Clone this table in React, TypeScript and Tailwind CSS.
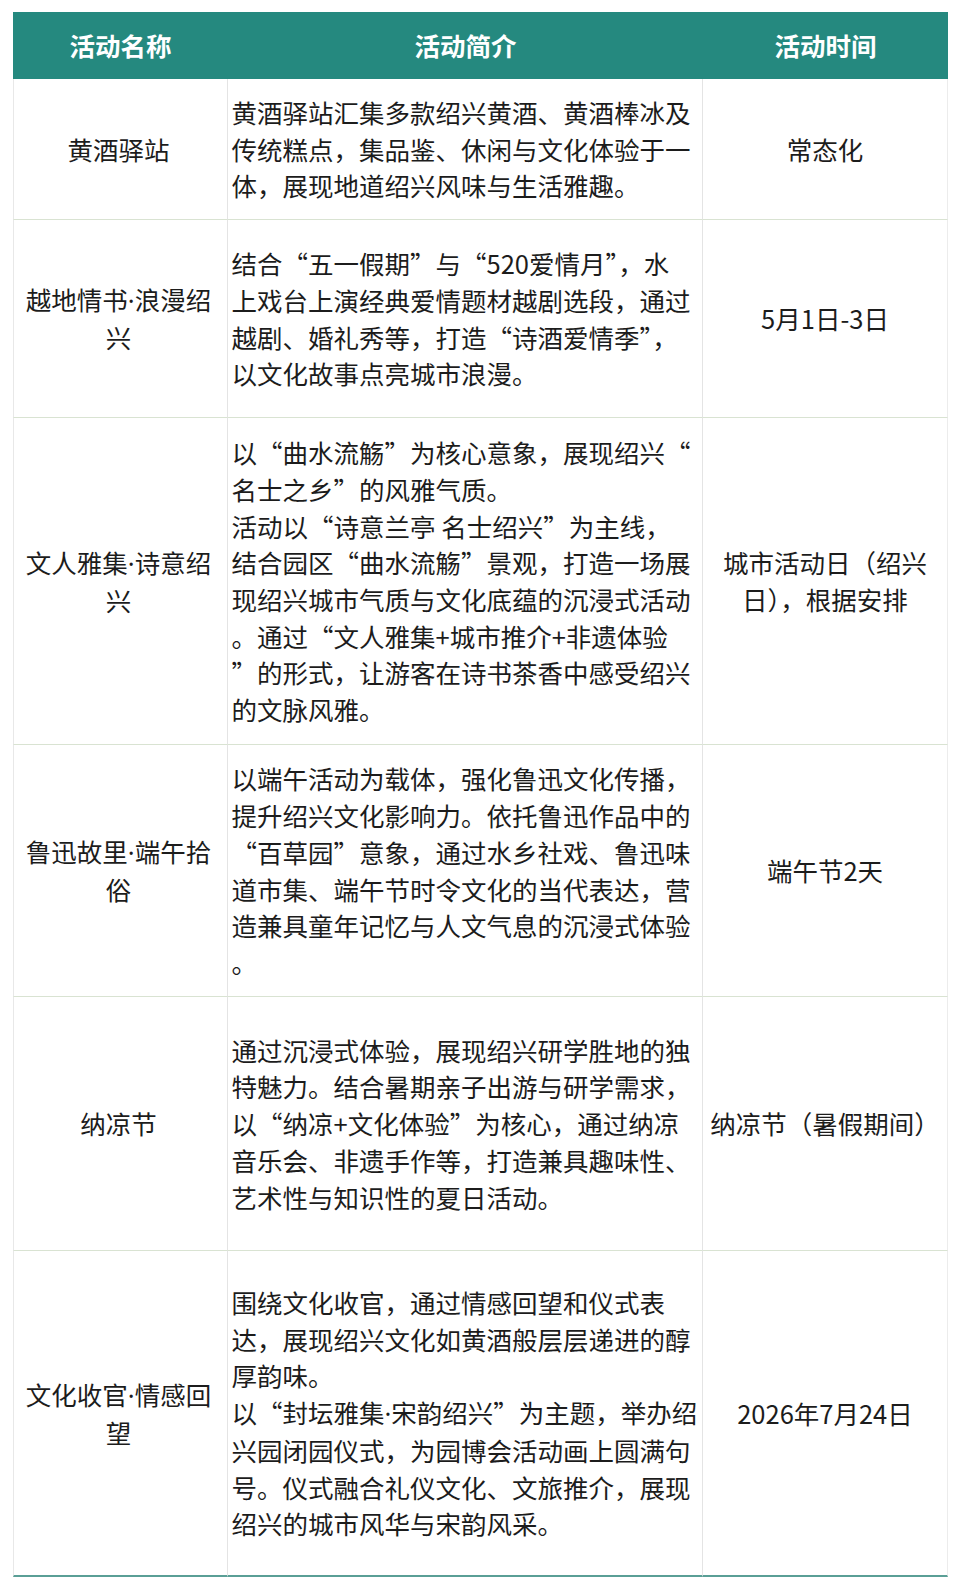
const rows: {
  name: string[];
  desc: string[];
  time: string[];
  h: string;
}[] = [
  {
    name: ["黄酒驿站"],
    desc: [
      "黄酒驿站汇集多款绍兴黄酒、黄酒棒冰及",
      "传统糕点，集品鉴、休闲与文化体验于一",
      "体，展现地道绍兴风味与生活雅趣。",
    ],
    time: ["常态化"],
    h: "h-[141px]",
  },
  {
    name: ["越地情书·浪漫绍", "兴"],
    desc: [
      "结合“五一假期”与“520爱情月”，水",
      "上戏台上演经典爱情题材越剧选段，通过",
      "越剧、婚礼秀等，打造“诗酒爱情季”，",
      "以文化故事点亮城市浪漫。",
    ],
    time: ["5月1日-3日"],
    h: "h-[198px]",
  },
  {
    name: ["文人雅集·诗意绍", "兴"],
    desc: [
      "以“曲水流觞”为核心意象，展现绍兴“",
      "名士之乡”的风雅气质。",
      "活动以“诗意兰亭 名士绍兴”为主线，",
      "结合园区“曲水流觞”景观，打造一场展",
      "现绍兴城市气质与文化底蕴的沉浸式活动",
      "。通过“文人雅集+城市推介+非遗体验",
      "”的形式，让游客在诗书茶香中感受绍兴",
      "的文脉风雅。",
    ],
    time: ["城市活动日（绍兴", "日），根据安排"],
    h: "h-[327px]",
  },
  {
    name: ["鲁迅故里·端午拾", "俗"],
    desc: [
      "以端午活动为载体，强化鲁迅文化传播，",
      "提升绍兴文化影响力。依托鲁迅作品中的",
      "“百草园”意象，通过水乡社戏、鲁迅味",
      "道市集、端午节时令文化的当代表达，营",
      "造兼具童年记忆与人文气息的沉浸式体验",
      "。",
    ],
    time: ["端午节2天"],
    h: "h-[252px]",
  },
  {
    name: ["纳凉节"],
    desc: [
      "通过沉浸式体验，展现绍兴研学胜地的独",
      "特魅力。结合暑期亲子出游与研学需求，",
      "以“纳凉+文化体验”为核心，通过纳凉",
      "音乐会、非遗手作等，打造兼具趣味性、",
      "艺术性与知识性的夏日活动。",
    ],
    time: ["纳凉节（暑假期间）"],
    h: "h-[254px]",
  },
  {
    name: ["文化收官·情感回", "望"],
    desc: [
      "围绕文化收官，通过情感回望和仪式表",
      "达，展现绍兴文化如黄酒般层层递进的醇",
      "厚韵味。",
      "以“封坛雅集·宋韵绍兴”为主题，举办绍",
      "兴园闭园仪式，为园博会活动画上圆满句",
      "号。仪式融合礼仪文化、文旅推介，展现",
      "绍兴的城市风华与宋韵风采。",
    ],
    time: ["2026年7月24日"],
    h: "h-[326px]",
  },
];

// the middle dot is narrow in the original, so take it from a latin font
function Line({ text }: { text: string }) {
  const parts = text.split("·");
  return (
    <div className="whitespace-nowrap">
      {parts.map((p, i) => (
        <span key={i}>
          {i > 0 && (
            <span style={{ fontFamily: '"Noto Sans", sans-serif' }}>·</span>
          )}
          {p}
        </span>
      ))}
    </div>
  );
}

function Lines({ lines }: { lines: string[] }) {
  return (
    <div>
      {lines.map((l, i) => (
        <Line key={i} text={l} />
      ))}
    </div>
  );
}

export default function App() {
  return (
    <div
      lang="zh-CN"
      className="min-h-[1589px] bg-white pt-[12px] pl-[13px] text-[#1c1c1c] text-[25.5px] leading-[36.7px]"
      style={{ fontFamily: '"Noto Sans CJK SC", "Noto Sans", sans-serif' }}
    >
      <div className="grid w-[935px] grid-cols-[215px_475px_245px]">
        {/* header */}
        <div className="col-span-3 grid h-[67px] grid-cols-[215px_475px_245px] bg-[#25897f] font-bold text-white">
          <div className="flex items-center justify-center">活动名称</div>
          <div className="flex items-center justify-center">活动简介</div>
          <div className="flex items-center justify-center">活动时间</div>
        </div>

        {rows.map((r, i) => {
          const last = i === rows.length - 1;
          const rowBorder = last
            ? "border-b-2 border-b-[#5a9f96]"
            : "border-b border-b-[#d9e3d2]";
          return (
            <div key={i} className="contents">
              <div
                className={`${r.h} ${rowBorder} flex items-center justify-center border-l border-r border-l-[#e8e8e8] border-r-[#e4e4e4] pr-[4px] text-center`}
              >
                <Lines lines={r.name} />
              </div>
              <div
                className={`${r.h} ${rowBorder} flex items-center border-r border-r-[#e4e4e4] pl-[3.5px]`}
              >
                <Lines lines={r.desc} />
              </div>
              <div
                className={`${r.h} ${rowBorder} flex items-center justify-center border-r border-r-[#ececec] text-center`}
              >
                <Lines lines={r.time} />
              </div>
            </div>
          );
        })}
      </div>
    </div>
  );
}
